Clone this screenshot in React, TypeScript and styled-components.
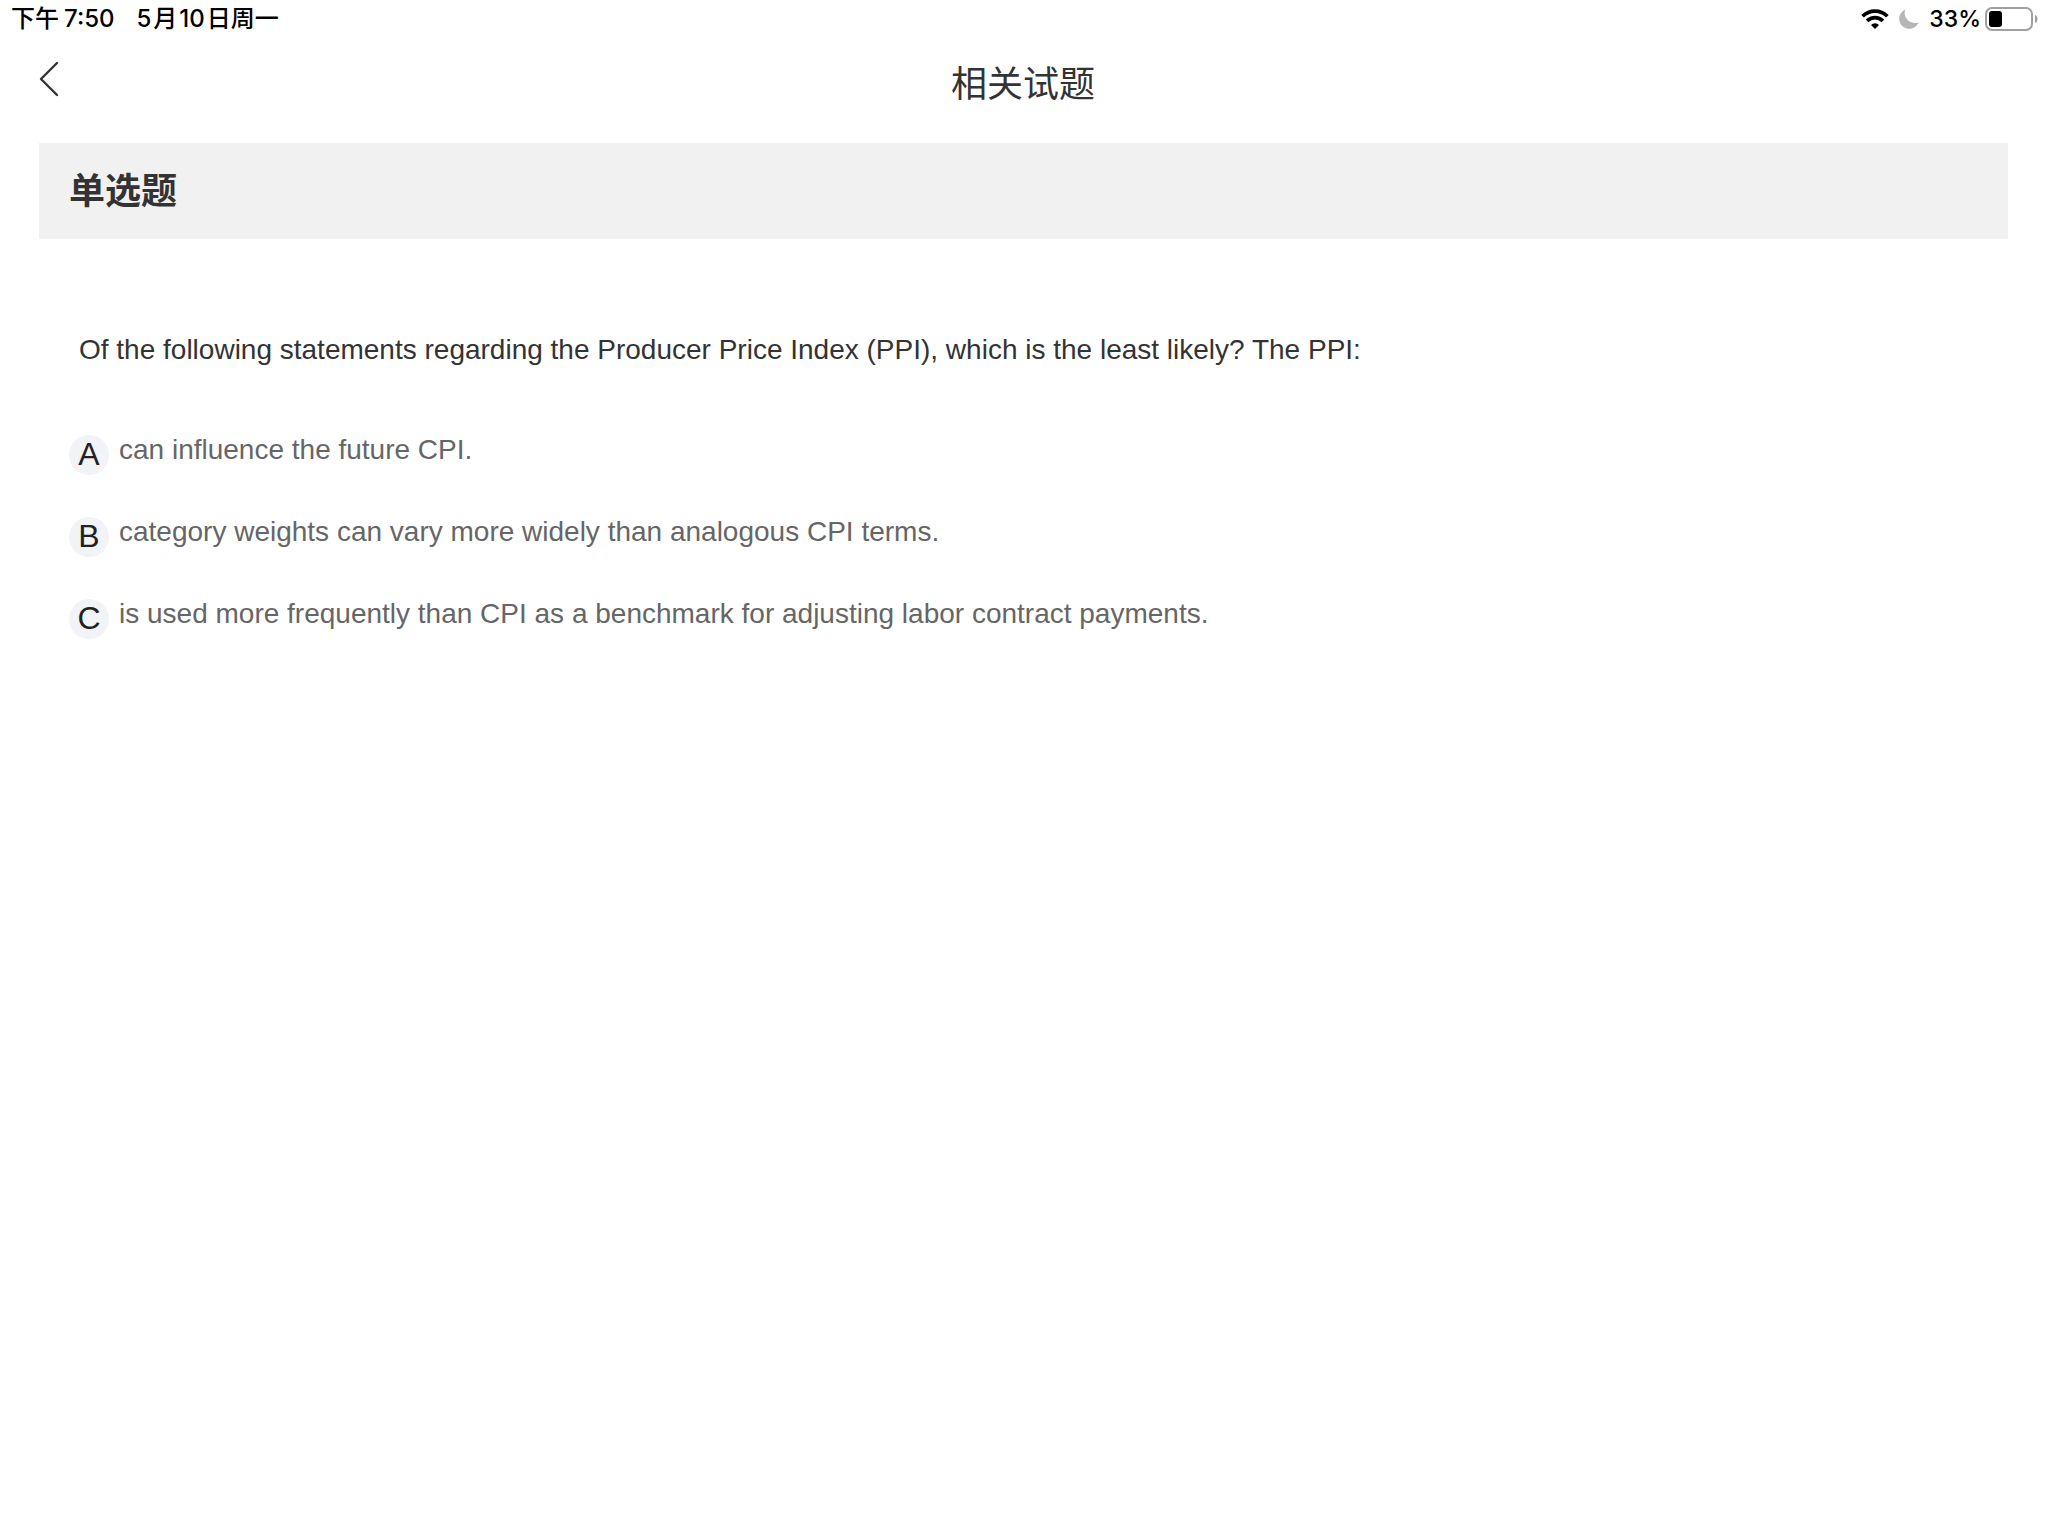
import React, { useState } from "react";
import styled, { createGlobalStyle } from "styled-components";

const GlobalStyle = createGlobalStyle`
  *, *::before, *::after { box-sizing: border-box; }
  body {
    margin: 0;
    background: #fff;
    color: #333;
    font-family: "Liberation Sans", Arial, "Noto Sans CJK SC", sans-serif;
  }
  h1, h2, p { margin: 0; }
`;

const StatusBar = styled.div`
  display: flex;
  align-items: center;
  justify-content: space-between;
  height: 38px;
  padding: 0 10px 0 11px;
  color: #000;
  font: 500 24px/38px Inter, "Noto Sans CJK SC", sans-serif;
`;

const StatusGroup = styled.div<{ $gap: number }>`
  display: flex;
  align-items: center;
  gap: ${({ $gap }) => $gap}px;
`;

const Time = styled.time<{ $gap: number }>`
  display: flex;
  gap: ${({ $gap }) => $gap}px;
`;

const Percent = styled.span`
  font-size: 23px;
`;

const Header = styled.header`
  display: grid;
  grid-template-columns: 60px 1fr 60px;
  align-items: center;
  height: 90px;
  padding: 0 21px 0 19px;
`;

const BackButton = styled.button`
  display: flex;
  justify-content: center;
  padding: 0 0 8px;
  border: 0;
  background: none;
  color: #333;
  cursor: pointer;
`;

const Title = styled.h1`
  padding-bottom: 4px;
  text-align: center;
  font: 400 36px/86px "Noto Sans CJK SC", sans-serif;
`;

const Main = styled.main`
  padding: 15px 40px 40px 39px;
`;

const TypeBand = styled.h2`
  padding: 0 30px 6px;
  background: #f1f1f1;
  font: 700 36px/90px "Noto Sans CJK SC", sans-serif;
`;

const Question = styled.p`
  margin: 91px 40px 0;
  font-size: 28px;
  line-height: 40px;
`;

const Options = styled.fieldset`
  display: flex;
  flex-direction: column;
  gap: 42px;
  margin: 65px 30px 0;
  padding: 0;
  border: 0;
`;

const Option = styled.label`
  display: flex;
  gap: 10px;
  cursor: pointer;
`;

const Badge = styled.span`
  display: grid;
  flex: none;
  width: 40px;
  height: 40px;
  justify-items: center;
  color: #222;
  font-size: 32px;
  line-height: 38px;
`;

const Radio = styled.input`
  grid-area: 1 / 1;
  appearance: none;
  width: 40px;
  height: 40px;
  margin: 0;
  border-radius: 50%;
  background: #f2f3f6;
  cursor: pointer;
  &:checked { background: #cfe0ff; }
`;

const Letter = styled.span`
  grid-area: 1 / 1;
`;

const OptionText = styled.span`
  color: #666;
  font-size: 28px;
  line-height: 30px;
`;

const WifiIcon = () => (
  <svg width="28" height="20" viewBox="0 0 28 20" aria-hidden="true">
    <g fill="none" stroke="#000" strokeWidth="3.7">
      <path d="M1.6 7.3a17.6 17.6 0 0 1 24.8 0" />
      <path d="M6.1 11.9a11.2 11.2 0 0 1 15.8 0" />
    </g>
    <path d="M14 20l-4-4a5.7 5.7 0 0 1 8 0z" />
  </svg>
);

const MoonIcon = () => (
  <svg width="20" height="20" viewBox="0 0 20 20" aria-hidden="true">
    <path d="M6.3.6A10 10 0 1 0 19.6 13.2 10 10 0 0 1 6.3.6z" fill="#b5b5b5" />
  </svg>
);

const BatteryIcon = () => (
  <svg width="53" height="24" viewBox="0 0 53 24" role="img" aria-label="33%">
    <rect x="1" y="1" width="46" height="22" rx="6" fill="none" stroke="#a0a0a0" strokeWidth="2" />
    <rect x="4" y="4" width="13" height="16" rx="3" fill="#000" />
    <path d="M50 8c3.3 1 3.3 7 0 8z" fill="#a0a0a0" />
  </svg>
);

const BackIcon = () => (
  <svg width="20" height="36" viewBox="0 0 20 36" aria-hidden="true">
    <path d="M18 2L2 18l16 16" fill="none" stroke="currentColor" strokeWidth="2.4" strokeLinecap="round" strokeLinejoin="round" />
  </svg>
);

const choices = [
  { key: "A", text: "can influence the future CPI." },
  { key: "B", text: "category weights can vary more widely than analogous CPI terms." },
  { key: "C", text: "is used more frequently than CPI as a benchmark for adjusting labor contract payments." },
];

export default function App() {
  const [answer, setAnswer] = useState("");
  return (
    <>
      <GlobalStyle />
      <StatusBar>
        <StatusGroup $gap={22}>
          <Time $gap={5}><span>下午</span><span>7:50</span></Time>
          <Time $gap={2}><span>5</span><span>月</span><span>10</span><span>日周一</span></Time>
        </StatusGroup>
        <StatusGroup $gap={10}>
          <WifiIcon />
          <MoonIcon />
          <StatusGroup $gap={4}>
            <Percent>33%</Percent>
            <BatteryIcon />
          </StatusGroup>
        </StatusGroup>
      </StatusBar>
      <Header>
        <BackButton type="button" aria-label="返回"><BackIcon /></BackButton>
        <Title>相关试题</Title>
      </Header>
      <Main>
        <TypeBand>单选题</TypeBand>
        <Question id="question">
          Of the following statements regarding the Producer Price Index (PPI), which is the least likely? The PPI:
        </Question>
        <Options aria-labelledby="question">
          {choices.map(({ key, text }) => (
            <Option key={key}>
              <Badge>
                <Radio type="radio" name="answer" value={key} checked={answer === key} onChange={() => setAnswer(key)} />
                <Letter>{key}</Letter>
              </Badge>
              <OptionText>{text}</OptionText>
            </Option>
          ))}
        </Options>
      </Main>
    </>
  );
}
